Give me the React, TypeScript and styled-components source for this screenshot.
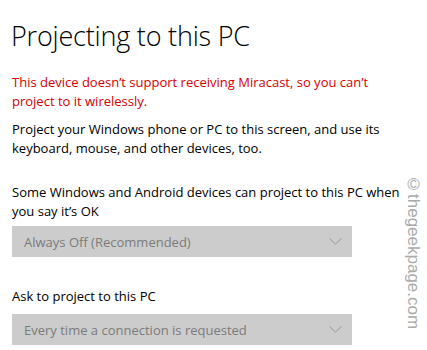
import React from "react";
import styled, { createGlobalStyle } from "styled-components";

const Global = createGlobalStyle`
  html, body { margin: 0; padding: 0; background: #ffffff; }
  body { font-family: "Open Sans", "Noto Sans", sans-serif; }
`;

const Page = styled.div`
  position: relative;
  width: 427px;
  height: 350px;
  overflow: hidden;
  background: #fff;
  padding: 18px 0 0 12px;
  box-sizing: border-box;
  display: flex;
  flex-direction: column;
`;

const Title = styled.h1`
  margin: 0 0 0 -1px;
  font-family: "Open Sans", sans-serif;
  font-weight: 300;
  font-size: 27px;
  line-height: 36px;
  color: #000;
  letter-spacing: -0.2px;
`;

const Text = styled.p<{ $color?: string; $mt: number }>`
  margin: ${(p) => p.$mt}px 0 0 0;
  font-size: 13px;
  line-height: 19px;
  color: ${(p) => p.$color ?? "#000"};
  white-space: nowrap;
`;

const Select = styled.div<{ $mt: number }>`
  margin-top: ${(p) => p.$mt}px;
  width: 340px;
  height: 31px;
  background: #cccccc;
  display: flex;
  align-items: center;
  justify-content: space-between;
  padding: 0 10px 0 12px;
  box-sizing: border-box;
  font-size: 13px;
  color: #7b7b7b;
`;

const Watermark = styled.div`
  position: absolute;
  left: 403px;
  top: 175px;
  writing-mode: vertical-rl;
  font-family: "Liberation Sans", Arial, sans-serif;
  font-size: 17px;
  color: #aaaaaa;
`;

const Chevron = () => (
  <svg width="13" height="7" viewBox="0 0 13 7">
    <path d="M0.5 0.5 L6.5 6 L12.5 0.5" fill="none" stroke="#999" strokeWidth="1" />
  </svg>
);

export default function App() {
  return (
    <>
      <Global />
      <Page>
        <Title>Projecting to this PC</Title>
        <Text $color="#d40000" $mt={19}>
          This device doesn’t support receiving Miracast, so you can’t
          <br />
          project to it wirelessly.
        </Text>
        <Text $mt={9}>
          Project your Windows phone or PC to this screen, and use its
          <br />
          keyboard, mouse, and other devices, too.
        </Text>
        <Text $mt={25}>
          Some Windows and Android devices can project to this PC when
          <br />
          you say it’s OK
        </Text>
        <Select $mt={5}>
          <span>Always Off (Recommended)</span>
          <Chevron />
        </Select>
        <Text $mt={30}>Ask to project to this PC</Text>
        <Select $mt={8}>
          <span>Every time a connection is requested</span>
          <Chevron />
        </Select>
        <Watermark>©thegeekpage.com</Watermark>
      </Page>
    </>
  );
}
